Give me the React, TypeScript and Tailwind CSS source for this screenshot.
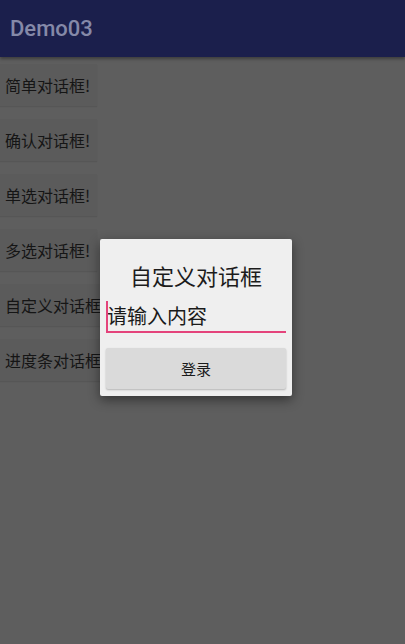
import React from "react";

const cjk = { fontFamily: '"Noto Sans CJK SC", "Noto Sans", sans-serif' };

const items = [
  { t: "简单对话框!", w: "w-[97px]" },
  { t: "确认对话框!", w: "w-[97px]" },
  { t: "单选对话框!", w: "w-[97px]" },
  { t: "多选对话框!", w: "w-[97px]" },
  { t: "自定义对话框", w: "w-[110px]" },
  { t: "进度条对话框", w: "w-[110px]" },
];

export default function App() {
  return (
    <div className="relative w-[405px] h-[644px] overflow-hidden bg-[#5e5e5e]">
      <div className="h-[57px] bg-[#1b1f4c] flex items-center pl-[10px] shadow-[0_2px_3px_rgba(0,0,0,0.35)]">
        <span
          className="text-[22px] font-medium text-[#8589a8] leading-none"
          style={{ fontFamily: "Roboto, sans-serif" }}
        >
          Demo03
        </span>
      </div>
      <div className="flex flex-col gap-[13px] pt-[7px]">
        {items.map((it) => (
          <div
            key={it.t}
            className={`${it.w} h-[42px] bg-[#5b5b5b] flex items-center pl-[5px] whitespace-nowrap overflow-hidden shadow-[0_1px_1px_rgba(0,0,0,0.08)]`}
          >
            <span className="text-[16px] text-[#151515] leading-none" style={cjk}>
              {it.t}
            </span>
          </div>
        ))}
      </div>

      <div className="absolute left-[100px] top-[239px] w-[192px] h-[157px] bg-[#efefef] rounded-[2px] shadow-[0_4px_12px_rgba(0,0,0,0.45)] flex flex-col px-[6px]">
        <div className="h-[56px] flex items-end justify-center pb-[9px]">
          <span className="text-[22px] text-[#1c1c1c] leading-none" style={cjk}>
            自定义对话框
          </span>
        </div>
        <div className="relative h-[38px] flex items-center border-b-2 border-[#e4437b]">
          <div className="absolute left-0 top-[6px] w-[2px] h-[30px] bg-[#e4437b]" />
          <span className="text-[20px] text-[#1a1a1a] leading-none pl-[1px] pt-[6px]" style={cjk}>
            请输入内容
          </span>
        </div>
        <div className="mt-[15px] h-[41px] bg-[#dadada] rounded-[2px] shadow-[0_1px_2px_rgba(0,0,0,0.25)] flex items-center justify-center">
          <span className="text-[15px] text-[#1a1a1a] leading-none" style={cjk}>
            登录
          </span>
        </div>
      </div>
    </div>
  );
}
